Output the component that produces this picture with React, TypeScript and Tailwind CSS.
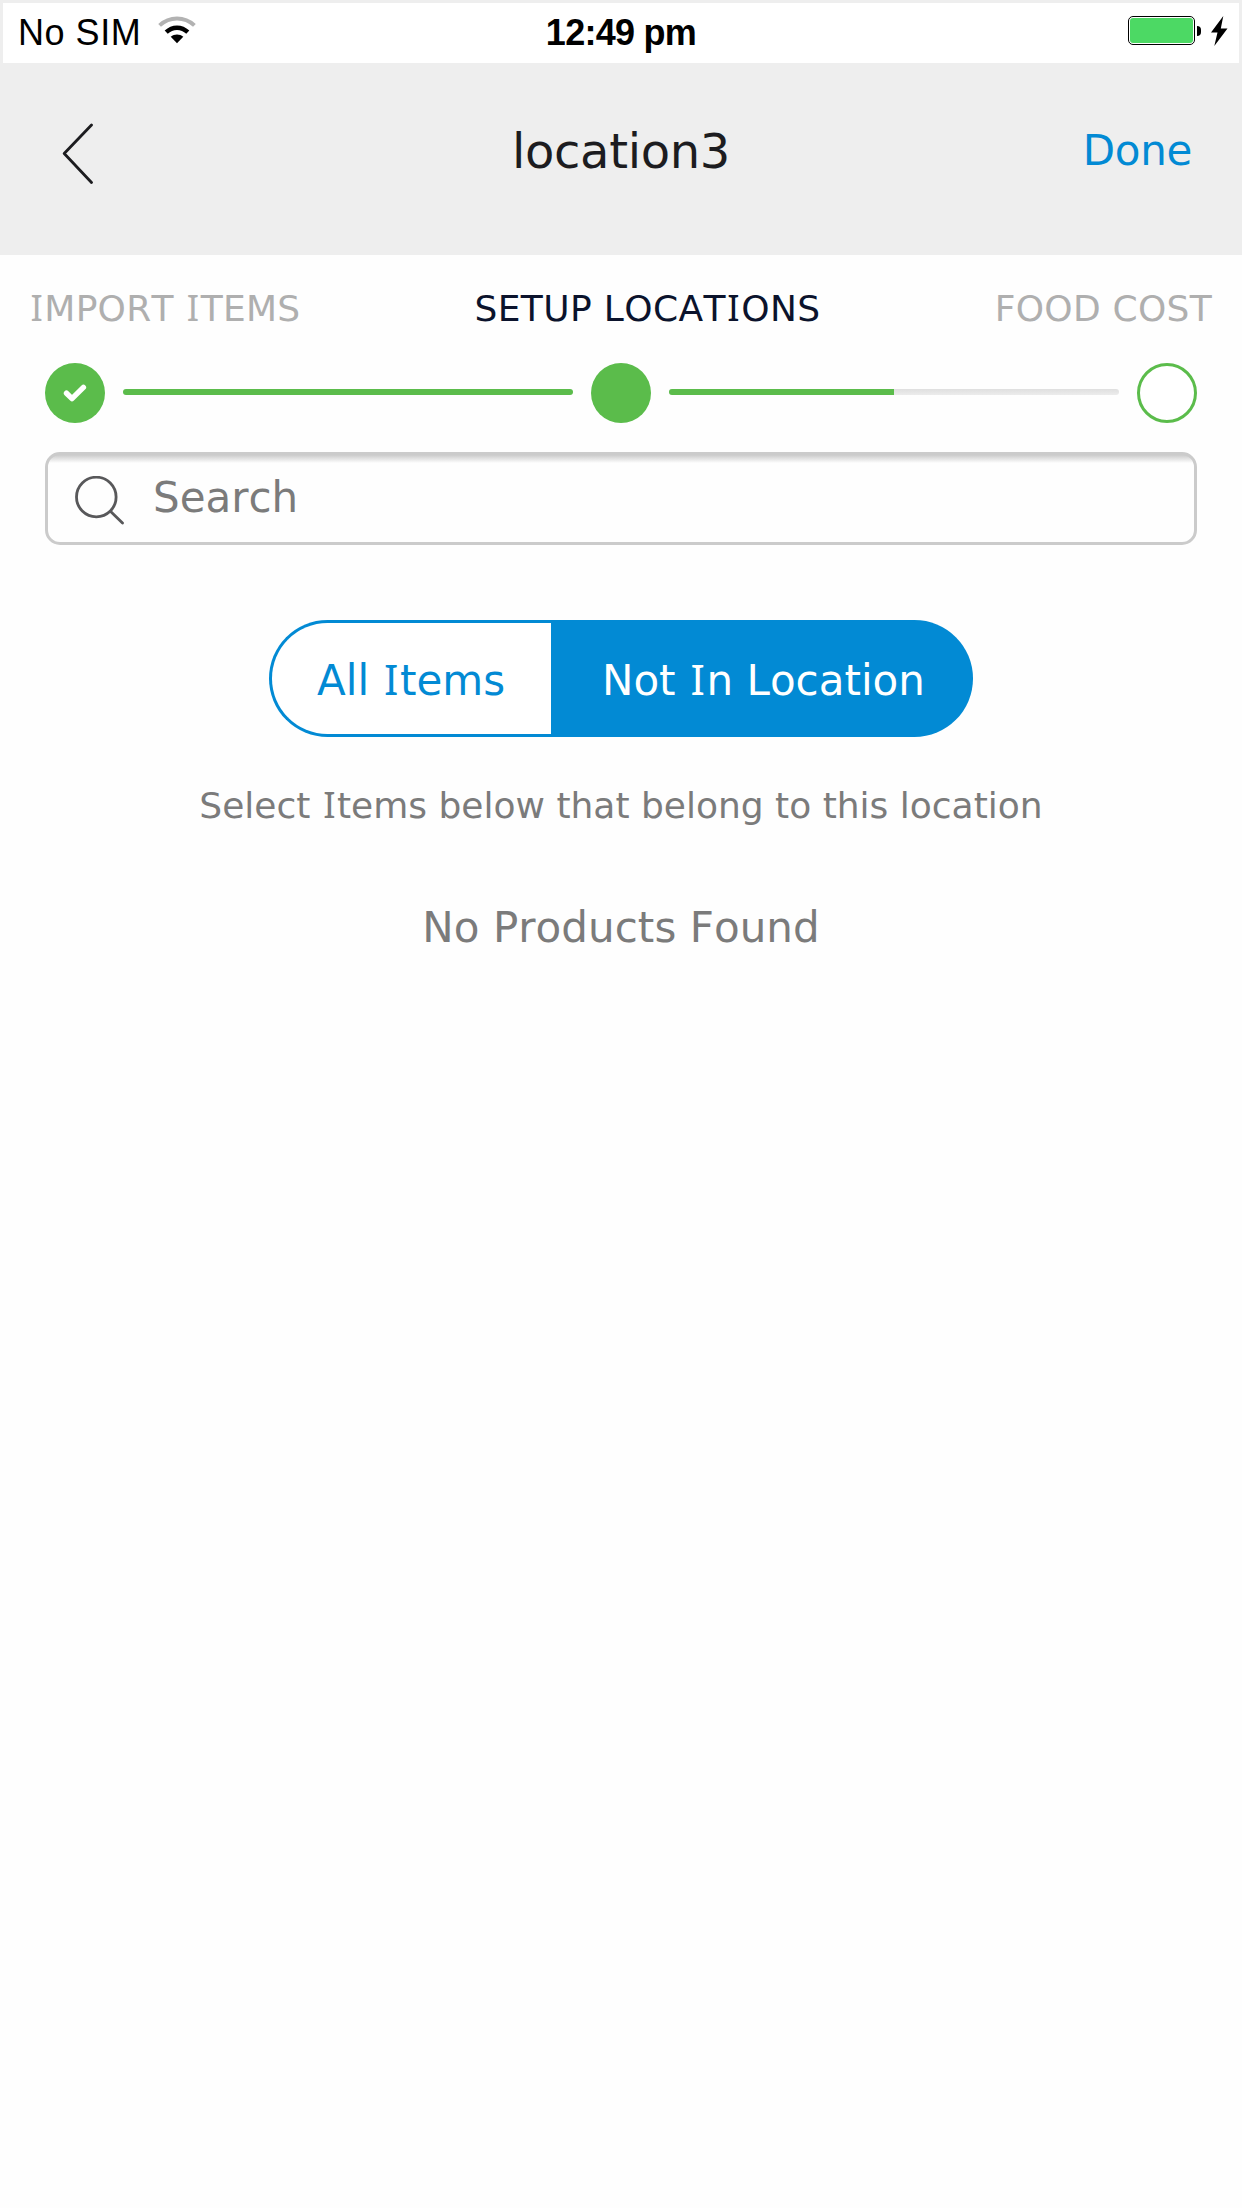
import { Fragment } from "react";

function Wide({ children }: { children: string }) {
  const parts = children.split("I");
  return (
    <>
      {parts.map((part, i) => (
        <Fragment key={i}>
          {i > 0 && (
            <span className="mx-[0.038em] font-['Noto_Sans',sans-serif] text-[1.01em] leading-[0]">I</span>
          )}
          {part}
        </Fragment>
      ))}
    </>
  );
}

function StatusBar() {
  return (
    <div className="grid h-[63px] grid-cols-[1fr_auto_1fr] items-center border-x-3 border-t-3 border-[#eeeeee] bg-white font-['Liberation_Sans',sans-serif] text-[36px] leading-[40px] text-black">
      <div className="flex items-center pl-[15px]">
        <span className="mb-px tracking-[0.53px]">No SIM</span>
        <svg className="mb-[6px] ml-[17px]" width="38" height="28" viewBox="0 0 38 28">
          <path d="M1.6 9.4C11.5 0.1 26.5 0.1 36.4 9.4" fill="none" stroke="#b2b2b2" strokeWidth="4" />
          <path d="M8.2 16.2C14.4 10.2 23.6 10.2 29.8 16.2" fill="none" stroke="#000" strokeWidth="4.4" />
          <path d="M12.7 20.8C16.4 17.6 21.6 17.6 25.3 20.8L19 27.2Z" fill="#000" />
        </svg>
      </div>
      <span className="mb-px font-bold tracking-[-0.72px]">12:49 pm</span>
      <div className="flex items-center justify-end pr-[11px]">
        <div className="mb-[5px] h-[29px] w-[67px] rounded-[5px] border border-black p-px">
          <div className="h-full rounded-[3px] bg-[#4cd964]" />
        </div>
        <div className="mb-[4px] ml-[2px] h-[10px] w-[4px] rounded-r-full bg-black" />
        <svg className="mb-[5px] ml-[10px]" width="17" height="30" viewBox="0 0 17 30">
          <path d="M12.3 0L0 16.5H6.5L3.3 30L16.5 12.5H9.8Z" fill="#000" />
        </svg>
      </div>
    </div>
  );
}

function Header() {
  return (
    <header className="grid h-[192px] grid-cols-[1fr_auto_1fr] items-start bg-[#eeeeee] leading-[48px]">
      <div className="pt-[60px] pl-[61px]">
        <svg width="32" height="62" viewBox="0 0 32 62" fill="none" stroke="#1c1c1f" strokeWidth="2.8" strokeLinecap="round" strokeLinejoin="round">
          <path d="M30.5 2L3.2 30.5L30.5 59.5" />
        </svg>
      </div>
      <h1 className="mt-[64px] text-[48px] tracking-[-0.34px] text-[#1c1c20]">location3</h1>
      <div className="pt-[64px] pr-[50px] text-right">
        <button className="text-[42px] leading-[48px] tracking-[-0.32px] text-[#028ad4]">Done</button>
      </div>
    </header>
  );
}

function Track({ fill }: { fill: number }) {
  return (
    <div className="mb-[2px] h-[6px] flex-1 overflow-hidden rounded-[3px] bg-linear-to-b from-[#dfdfdf] to-[#ececec]">
      <div className="h-full bg-[#5bbc4b]" style={{ width: `${fill}%` }} />
    </div>
  );
}

function Steps() {
  return (
    <section>
      <div className="flex justify-between pt-[34px] pr-[30px] pl-[29px] text-[36px] leading-[40px] text-[#afafaf]">
        <span className="tracking-[0.25px]"><Wide>IMPORT ITEMS</Wide></span>
        <span className="tracking-[0.38px] text-[#0b132c]"><Wide>SETUP LOCATIONS</Wide></span>
        <span className="tracking-[0.27px]">FOOD COST</span>
      </div>
      <div className="mt-[34px] flex items-center gap-[18px] px-[45px]">
        <div className="flex size-[60px] items-center justify-center rounded-full bg-[#5bbc4b]">
          <svg width="24" height="18" viewBox="0 0 24 18" fill="none" stroke="#fff" strokeWidth="5.4" strokeLinecap="round" strokeLinejoin="round">
            <path d="M3.5 9.2L9 14.6L20.4 3.4" />
          </svg>
        </div>
        <Track fill={100} />
        <div className="size-[60px] rounded-full bg-[#5bbc4b]" />
        <Track fill={50} />
        <div className="size-[60px] rounded-full border-3 border-[#5bbc4b] bg-white" />
      </div>
    </section>
  );
}

function SearchBox() {
  return (
    <div className="mx-[45px] mt-[29px] flex h-[93px] items-center rounded-[15px] border-3 border-[#cbcbcb] bg-linear-to-b from-[#cbcbcb] to-[#fefefe] to-[8px] pl-[27px]">
      <svg className="mt-[4px]" width="49" height="49" viewBox="0 0 49 49" fill="none" stroke="#58585a" strokeWidth="2.8" strokeLinecap="round">
        <circle cx="21.3" cy="21" r="19.8" />
        <path d="M35.4 35.2L47.5 47" />
      </svg>
      <span className="mb-[2px] ml-[29px] text-[42px] leading-[48px] text-[#7b7b7b]">Search</span>
    </div>
  );
}

export default function App() {
  return (
    <div className="min-h-[2208px] w-[1242px] bg-[#fefefe] font-['DejaVu_Sans',Verdana,sans-serif] whitespace-nowrap [font-kerning:none]">
      <StatusBar />
      <Header />
      <Steps />
      <SearchBox />
      <div className="mx-auto mt-[75px] flex h-[117px] w-[704px] overflow-hidden text-[42px] leading-[48px]">
        <button className="flex w-[282px] items-center rounded-l-[60px] border-y-3 border-l-3 border-[#028ad4] bg-white pl-[45px] text-[#028ad4]">
          <span className="mt-[5px]"><Wide>All Items</Wide></span>
        </button>
        <button className="flex flex-1 items-center rounded-r-[60px] bg-[#028ad4] pl-[51px] text-white">
          <span className="mt-[5px]"><Wide>Not In Location</Wide></span>
        </button>
      </div>
      <p className="mt-[49px] text-center text-[36px] leading-[40px] text-[#7b7b7b]">
        <Wide>Select Items below that belong to this location</Wide>
      </p>
      <p className="mt-[78px] text-center text-[42px] leading-[48px] tracking-[0.05px] text-[#7b7b7b]">No Products Found</p>
    </div>
  );
}
